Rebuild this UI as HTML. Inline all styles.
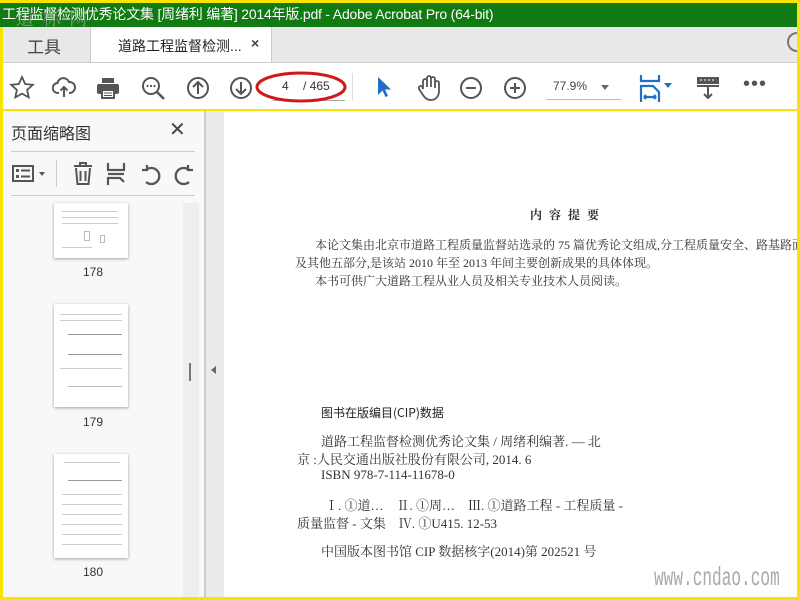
<!DOCTYPE html>
<html><head><meta charset="utf-8"><style>
*{margin:0;padding:0;box-sizing:border-box}
body{width:800px;height:600px;overflow:hidden;background:#f7e400;position:relative;font-family:"Liberation Sans","Noto Sans CJK SC",sans-serif}
.abs{position:absolute}
#title{left:0;top:3px;width:797px;height:24px;background:#117a12;color:#fff;font-size:14px;line-height:22px;padding-left:2px;white-space:nowrap;overflow:hidden;letter-spacing:-0.2px}
#tabs{left:3px;top:27px;width:794px;height:36px;background:#e8e8e8;border-bottom:1px solid #ccc;overflow:hidden}
#tb{left:3px;top:63px;width:794px;height:47px;background:#fff;border-bottom:1px solid #d0d0d0}
#side{left:3px;top:111px;width:202px;height:486px;background:#f8f8f8;border-right:1px solid #c8c8c8}
#gut{left:206px;top:111px;width:18px;height:486px;background:#ebebeb}
#page{left:224px;top:111px;width:573px;height:486px;background:#fff;font-family:"Liberation Serif","Noto Serif CJK SC",serif;color:#333;font-size:12px;overflow:hidden}
.t{position:absolute;white-space:nowrap}
svg{position:absolute}
.thumb{position:absolute;background:#fff;box-shadow:0 1px 3px rgba(0,0,0,.35);left:51px;width:74px}
.tl{position:absolute;height:1px;background:#ccc}
</style></head><body>
<div id="title" class="abs">工程监督检测优秀论文集 [周绪利 编著] 2014年版.pdf - Adobe Acrobat Pro (64-bit)</div>
<div class="abs" style="left:16px;top:5px;color:rgba(170,170,170,.7);font-size:18px;font-family:'Noto Serif CJK SC',serif;letter-spacing:2px">道 标 网</div>
<div id="tabs" class="abs">
 <div class="t" style="left:24px;top:6px;font-size:17px;color:#444">工具</div>
 <div class="abs" style="left:87px;top:0;width:182px;height:37px;background:#fff;border-left:1px solid #ccc;border-right:1px solid #ccc"></div>
 <div class="t" style="left:115px;top:9px;font-size:14px;color:#222">道路工程监督检测...</div>
 <div class="t" style="left:248px;top:8px;font-size:14px;color:#444;font-weight:bold">×</div>
 <div class="abs" style="left:784px;top:5px;width:20px;height:20px;border:2px solid #777;border-radius:50%"></div>
</div>
<div id="tb" class="abs">
 <svg style="left:6px;top:12px" width="26" height="26" viewBox="0 0 26 26"><path d="M13 2l3.2 7 7.6.8-5.7 5.1 1.6 7.5L13 18.6l-6.7 3.8 1.6-7.5L2.2 9.8l7.6-.8z" fill="none" stroke="#555" stroke-width="1.8"/></svg>
 <svg style="left:49px;top:13px" width="24" height="24" viewBox="0 0 24 24"><path d="M7 17H6a5 5 0 0 1-.5-10A6 6 0 0 1 17 6a4.5 4.5 0 0 1 1 11h-1M12 21V11M8.5 14.5L12 11l3.5 3.5" fill="none" stroke="#555" stroke-width="2"/></svg>
 <svg style="left:93px;top:13px" width="24" height="24" viewBox="0 0 24 24"><rect x="6" y="2" width="12" height="5" fill="#555"/><rect x="1" y="8" width="22" height="10" rx="2" fill="#555"/><rect x="6" y="14" width="12" height="8" fill="#fff" stroke="#555" stroke-width="2"/><path d="M8 17h8M8 19.5h8" stroke="#555"/></svg>
 <svg style="left:138px;top:13px" width="26" height="26" viewBox="0 0 26 26"><circle cx="10" cy="10" r="8" fill="none" stroke="#555" stroke-width="2"/><path d="M16 16l7 7" stroke="#555" stroke-width="2.5"/><circle cx="6.5" cy="10" r="1.1" fill="#555"/><circle cx="10" cy="10" r="1.1" fill="#555"/><circle cx="13.5" cy="10" r="1.1" fill="#555"/></svg>
 <svg style="left:183px;top:13px" width="24" height="24" viewBox="0 0 24 24"><circle cx="12" cy="12" r="10" fill="none" stroke="#555" stroke-width="2"/><path d="M12 18V6M7 11l5-5 5 5" fill="none" stroke="#555" stroke-width="2"/></svg>
 <svg style="left:226px;top:13px" width="24" height="24" viewBox="0 0 24 24"><circle cx="12" cy="12" r="10" fill="none" stroke="#555" stroke-width="2"/><path d="M12 6v12M7 13l5 5 5-5" fill="none" stroke="#555" stroke-width="2"/></svg>
 <div class="abs" style="left:270px;top:37px;width:72px;height:1px;background:#aaa"></div>
 <div class="t" style="left:279px;top:16px;font-size:12px;color:#333">4</div>
 <div class="t" style="left:300px;top:16px;font-size:12px;color:#333">/ 465</div>
 <svg style="left:252px;top:6px" width="96" height="36" viewBox="0 0 96 36"><ellipse cx="46" cy="18" rx="44" ry="14" fill="none" stroke="#d01818" stroke-width="3"/></svg>
 <div class="abs" style="left:349px;top:10px;width:1px;height:28px;background:#ddd"></div>
 <svg style="left:371px;top:12px" width="20" height="24" viewBox="0 0 20 24"><path d="M4 2v18l4.5-4.5 3 6.5 2.5-1-3-6.5H17z" fill="#1f6fc7"/></svg>
 <svg style="left:413px;top:11px" width="26" height="28" viewBox="0 0 26 28"><path d="M7 15V7a2 2 0 0 1 4 0v6V4a2 2 0 0 1 4 0v9V5a2 2 0 0 1 4 0v9-5a2 2 0 0 1 4 0v8c0 6-4 9-8 9s-6-2-8-5l-4-6a2 2 0 0 1 3.5-2z" fill="none" stroke="#555" stroke-width="1.8"/></svg>
 <svg style="left:456px;top:13px" width="24" height="24" viewBox="0 0 24 24"><circle cx="12" cy="12" r="10" fill="none" stroke="#555" stroke-width="2"/><path d="M7 12h10" stroke="#555" stroke-width="2"/></svg>
 <svg style="left:500px;top:13px" width="24" height="24" viewBox="0 0 24 24"><circle cx="12" cy="12" r="10" fill="none" stroke="#555" stroke-width="2"/><path d="M7 12h10M12 7v10" stroke="#555" stroke-width="2"/></svg>
 <div class="t" style="left:550px;top:16px;font-size:12px;color:#444">77.9%</div>
 <div class="abs" style="left:598px;top:22px;border:4px solid transparent;border-top:5px solid #666"></div>
 <div class="abs" style="left:543px;top:36px;width:75px;height:1px;background:#bbb"></div>
 <svg style="left:636px;top:11px" width="36" height="28" viewBox="0 0 36 28"><path d="M2 1v6h18V1M2 28V12h12l6 6v10M5 23h12M5 23l2-2M5 23l2 2M17 23l-2-2M17 23l-2 2" fill="none" stroke="#1f6fc7" stroke-width="2.2"/><path d="M25 9h8l-4 5z" fill="#1f6fc7"/></svg>
 <svg style="left:693px;top:12px" width="24" height="26" viewBox="0 0 24 26"><rect x="1" y="2" width="22" height="7" fill="#555"/><path d="M4 5h2M8 5h2M12 5h2M16 5h2" stroke="#fff"/><path d="M1 11h22M12 11v12M8 19l4 4 4-4" fill="none" stroke="#555" stroke-width="2"/></svg>
 <div class="t" style="left:740px;top:10px;font-size:20px;color:#555;letter-spacing:1px">•••</div>
</div>
<div id="side" class="abs">
 <div class="t" style="left:8px;top:9px;font-size:16px;color:#333">页面缩略图</div>
 <div class="t" style="left:166px;top:6px;font-size:20px;color:#444">✕</div>
 <div class="abs" style="left:8px;top:40px;width:184px;height:1px;background:#ccc"></div>
 <svg style="left:9px;top:53px" width="24" height="20" viewBox="0 0 24 20"><rect x="1" y="2" width="20" height="15" fill="none" stroke="#555" stroke-width="2"/><rect x="4" y="5" width="3" height="3" fill="#555"/><rect x="4" y="11" width="3" height="3" fill="#555"/><path d="M9 6.5h9M9 12.5h9" stroke="#555" stroke-width="2"/></svg>
 <div class="abs" style="left:36px;top:61px;border:3.5px solid transparent;border-top:4px solid #555"></div>
 <div class="abs" style="left:53px;top:49px;width:1px;height:27px;background:#ccc"></div>
 <svg style="left:69px;top:51px" width="22" height="24" viewBox="0 0 22 24"><path d="M2 4h18M8 4V1h6v3M4 6l1.5 16h11L18 6M8.5 9v10M13.5 9v10" fill="none" stroke="#555" stroke-width="2"/></svg>
 <svg style="left:103px;top:51px" width="20" height="24" viewBox="0 0 20 24"><path d="M2 1v7h16V1M2 12h16M2 23v-7h12l4 4" fill="none" stroke="#555" stroke-width="2.2"/></svg>
 <svg style="left:137px;top:51px" width="22" height="24" viewBox="0 0 22 24"><path d="M6 20a8 8 0 1 0 0-12M2 8h5V3" fill="none" stroke="#555" stroke-width="2.3"/></svg>
 <svg style="left:170px;top:51px" width="22" height="24" viewBox="0 0 22 24"><path d="M16 20a8 8 0 1 1 0-12M20 8h-5V3" fill="none" stroke="#555" stroke-width="2.3"/></svg>
 <div class="abs" style="left:8px;top:84px;width:184px;height:1px;background:#ccc"></div>
 <div class="abs" style="left:180px;top:92px;width:16px;height:394px;background:#eee"></div>
 <div class="abs" style="left:186px;top:252px;width:2px;height:18px;background:#777"></div>
 <div class="thumb" style="top:92px;height:55px"><div class="tl" style="left:8px;top:8px;width:56px"></div><div class="tl" style="left:8px;top:14px;width:56px"></div><div class="tl" style="left:8px;top:20px;width:56px"></div><div class="abs" style="left:30px;top:28px;width:6px;height:10px;border:1px solid #bbb"></div><div class="abs" style="left:46px;top:32px;width:5px;height:8px;border:1px solid #bbb"></div><div class="tl" style="left:8px;top:44px;width:30px"></div></div>
 <div class="t" style="left:80px;top:154px;font-size:12px;color:#333">178</div>
 <div class="thumb" style="top:193px;height:103px"><div class="tl" style="left:6px;top:10px;width:62px"></div><div class="tl" style="left:6px;top:16px;width:62px"></div><div class="tl" style="left:14px;top:30px;width:54px;background:#999"></div><div class="tl" style="left:14px;top:50px;width:54px;background:#999"></div><div class="tl" style="left:6px;top:64px;width:62px"></div><div class="tl" style="left:14px;top:82px;width:54px;background:#bbb"></div></div>
 <div class="t" style="left:80px;top:304px;font-size:12px;color:#333">179</div>
 <div class="thumb" style="top:343px;height:104px"><div class="tl" style="left:10px;top:8px;width:56px"></div><div class="tl" style="left:14px;top:26px;width:54px;background:#999"></div><div class="tl" style="left:8px;top:40px;width:60px"></div><div class="tl" style="left:8px;top:50px;width:60px"></div><div class="tl" style="left:8px;top:60px;width:60px"></div><div class="tl" style="left:8px;top:70px;width:60px"></div><div class="tl" style="left:8px;top:80px;width:60px"></div><div class="tl" style="left:8px;top:90px;width:60px"></div></div>
 <div class="t" style="left:80px;top:454px;font-size:12px;color:#333">180</div>
</div>
<div id="gut" class="abs"><div class="abs" style="left:5px;top:255px;border:4px solid transparent;border-right:5px solid #666;border-left:0"></div></div>
<div id="page" class="abs">
 <div class="t" style="left:306px;top:95px;font-size:12px;letter-spacing:7px;font-weight:bold">内容提要</div>
 <div class="t" style="left:91px;top:125px">本论文集由北京市道路工程质量监督站选录的 75 篇优秀论文组成,分工程质量安全、路基路面、桥梁隧道</div>
 <div class="t" style="left:71px;top:143px">及其他五部分,是该站 2010 年至 2013 年间主要创新成果的具体体现。</div>
 <div class="t" style="left:91px;top:161px">本书可供广大道路工程从业人员及相关专业技术人员阅读。</div>
 <div class="t" style="left:97px;top:293px;font-family:'Noto Sans CJK SC',sans-serif;font-size:12px;color:#222">图书在版编目(CIP)数据</div>
 <div class="t" style="left:97px;top:320px;font-size:13px">道路工程监督检测优秀论文集 / 周绪利编著. — 北</div>
 <div class="t" style="left:73px;top:338px;font-size:13px">京 :人民交通出版社股份有限公司, 2014. 6</div>
 <div class="t" style="left:97px;top:356px;font-size:13px">ISBN 978-7-114-11678-0</div>
 <div class="t" style="left:101px;top:384px;font-size:13px">Ⅰ. ①道…　Ⅱ. ①周…　Ⅲ. ①道路工程 - 工程质量 -</div>
 <div class="t" style="left:73px;top:402px;font-size:13px">质量监督 - 文集　Ⅳ. ①U415. 12-53</div>
 <div class="t" style="left:97px;top:430px;font-size:13px">中国版本图书馆 CIP 数据核字(2014)第 202521 号</div>
 <div class="t" style="left:430px;top:452px;font-size:26px;color:#aaa;font-family:'Liberation Mono',monospace;transform:scaleX(.62);transform-origin:left">www.cndao.com</div>
</div>
</body></html>
